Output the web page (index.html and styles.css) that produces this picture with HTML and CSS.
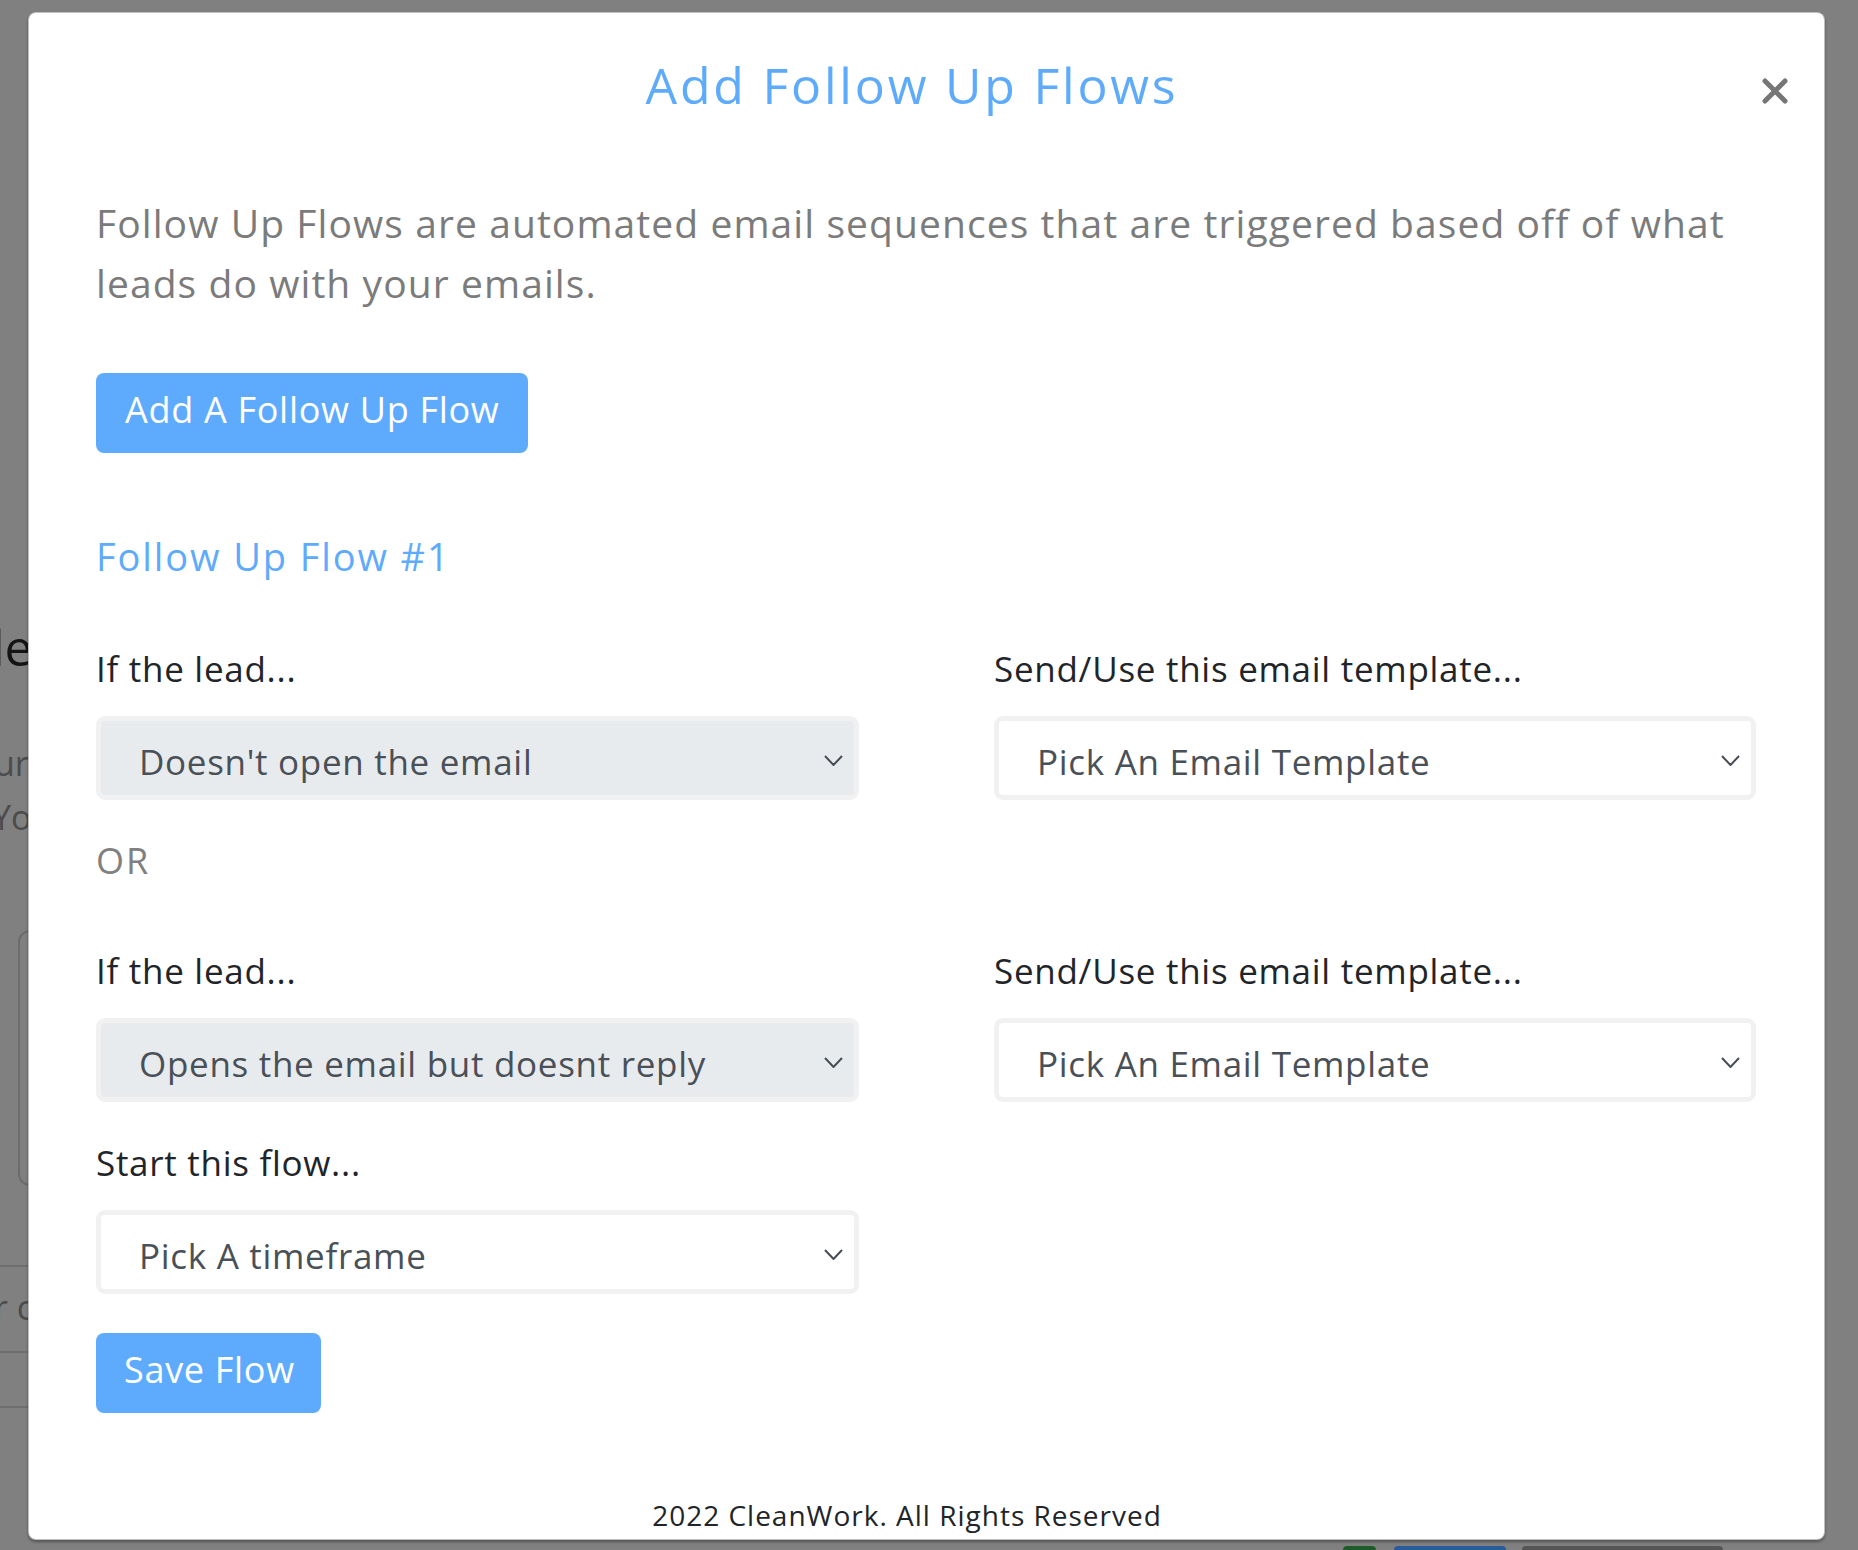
FILE: index.html
```html
<!DOCTYPE html>
<html lang="en">
<head>
<meta charset="utf-8">
<title>Add Follow Up Flows</title>
<link rel="stylesheet" href="styles.css">
</head>
<body>
<div class="backdrop">
  <span class="bg-frag bg-le">le</span>
  <span class="bg-frag bg-ur">ur</span>
  <span class="bg-frag bg-yo">Yo</span>
  <span class="bg-frag bg-rc">r c</span>
  <span class="bg-box"></span>
  <span class="bg-line bg-line1"></span>
  <span class="bg-line bg-line2"></span>
  <span class="bg-line bg-line3"></span>
  <span class="bg-chip chip-green"></span>
  <span class="bg-chip chip-blue"></span>
  <span class="bg-chip chip-gray"></span>
</div>

<div class="modal">
  <div class="modal-header">
    <h1 class="modal-title">Add Follow Up Flows</h1>
    <button class="close" aria-label="Close">
      <svg width="26" height="26" viewBox="0 0 26 26"><path d="M3 3 L23 23 M23 3 L3 23" stroke="#767676" stroke-width="5" stroke-linecap="round" fill="none"/></svg>
    </button>
  </div>

  <div class="modal-body">
    <p class="intro">Follow Up Flows are automated email sequences that are triggered based off of what leads do with your emails.</p>

    <button class="btn">Add A Follow Up Flow</button>

    <h2 class="flow-title">Follow Up Flow #1</h2>

    <div class="row">
      <div class="field">
        <label class="label">If the lead...</label>
        <div class="select select-filled"><span>Doesn't open the email</span>
          <svg class="chev" width="19" height="11" viewBox="0 0 19 11"><polyline points="1,1 9.5,10 18,1" fill="none" stroke="#464d55" stroke-width="2"/></svg>
        </div>
      </div>
      <div class="field">
        <label class="label">Send/Use this email template...</label>
        <div class="select"><span>Pick An Email Template</span>
          <svg class="chev" width="19" height="11" viewBox="0 0 19 11"><polyline points="1,1 9.5,10 18,1" fill="none" stroke="#464d55" stroke-width="2"/></svg>
        </div>
      </div>
    </div>

    <div class="or">OR</div>

    <div class="row">
      <div class="field">
        <label class="label">If the lead...</label>
        <div class="select select-filled"><span>Opens the email but doesnt reply</span>
          <svg class="chev" width="19" height="11" viewBox="0 0 19 11"><polyline points="1,1 9.5,10 18,1" fill="none" stroke="#464d55" stroke-width="2"/></svg>
        </div>
      </div>
      <div class="field">
        <label class="label">Send/Use this email template...</label>
        <div class="select"><span>Pick An Email Template</span>
          <svg class="chev" width="19" height="11" viewBox="0 0 19 11"><polyline points="1,1 9.5,10 18,1" fill="none" stroke="#464d55" stroke-width="2"/></svg>
        </div>
      </div>
    </div>

    <div class="row row-start">
      <div class="field">
        <label class="label">Start this flow...</label>
        <div class="select"><span>Pick A timeframe</span>
          <svg class="chev" width="19" height="11" viewBox="0 0 19 11"><polyline points="1,1 9.5,10 18,1" fill="none" stroke="#464d55" stroke-width="2"/></svg>
        </div>
      </div>
    </div>

    <button class="btn btn-save">Save Flow</button>

    <footer class="footer">2022 CleanWork. All Rights Reserved</footer>
  </div>
</div>
</body>
</html>
```

FILE: styles.css
```css
* { box-sizing: border-box; }

html, body {
  margin: 0;
  padding: 0;
}

body {
  width: 1858px;
  height: 1550px;
  overflow: hidden;
  background: #808080;
  font-family: "Open Sans", "Noto Sans", sans-serif;
  position: relative;
}

/* dimmed page behind the overlay */
.backdrop {
  position: absolute;
  inset: 0;
  z-index: 0;
}
.bg-frag {
  position: absolute;
  font-family: "Open Sans", sans-serif;
  line-height: 1;
}
.bg-le { top: 622px; font-size: 50px; color: #141414; left: -8px; }
.bg-ur { top: 746px; font-size: 34px; color: #4c4c4c; left: -6px; }
.bg-yo { top: 800px; font-size: 34px; color: #4c4c4c; left: -8px; }
.bg-rc { top: 1290px; font-size: 34px; color: #4c4c4c; left: -6px; }
.bg-box {
  position: absolute;
  left: 18px;
  top: 930px;
  width: 40px;
  height: 256px;
  border: 2px solid #6c6c6c;
  border-radius: 12px;
}
.bg-line {
  position: absolute;
  left: 0;
  width: 40px;
  height: 2px;
  background: #6e6e6e;
}
.bg-line1 { top: 1265px; }
.bg-line2 { top: 1351px; }
.bg-line3 { top: 1406px; }
.bg-chip {
  position: absolute;
  top: 1546px;
  height: 10px;
  border-radius: 4px;
}
.chip-green { left: 1343px; width: 33px; background: #1e5b2a; }
.chip-blue { left: 1394px; width: 112px; background: #2a5b99; }
.chip-gray { left: 1522px; width: 201px; background: #555; }

/* modal */
.modal {
  position: relative;
  z-index: 1;
  margin: 12px 0 0 28px;
  width: 1797px;
  height: 1528px;
  background: #fff;
  border-radius: 8px;
  border: 1px solid rgba(0, 0, 0, 0.25);
  box-shadow: 0 2px 3px rgba(0, 0, 0, 0.35);
}

.modal-header {
  display: flex;
  align-items: flex-start;
  padding: 42px 36px 0 33px;
}
.modal-title {
  flex: 1;
  margin: 0;
  text-align: center;
  font-size: 50px;
  line-height: 60px;
  font-weight: 400;
  letter-spacing: 2.8px;
  color: #5fabfb;
}
.close {
  margin-top: 23px;
  padding: 0;
  border: 0;
  background: none;
  width: 26px;
  height: 26px;
  display: block;
}
.close svg { display: block; }

.modal-body {
  padding: 0 68px 0 67px;
}

.intro {
  margin: 78px 0 0 0;
  font-size: 39px;
  line-height: 60px;
  letter-spacing: 1.08px;
  color: #7b7b7b;
}

.btn {
  display: inline-block;
  margin-top: 60px;
  padding: 15px 29px 21px;
  border: 0;
  border-radius: 8px;
  background: #5eabfd;
  color: #fff;
  font-family: inherit;
  font-size: 36px;
  line-height: 44px;
  letter-spacing: 0.7px;
  height: 80px;
}

.flow-title {
  margin: 80px 0 0 0;
  font-size: 38px;
  line-height: 46px;
  font-weight: 400;
  letter-spacing: 1.9px;
  color: #5fabfb;
}

.row {
  display: grid;
  grid-template-columns: 763px 762px;
  column-gap: 135px;
}
.flow-title + .row { margin-top: 68px; }
.or + .row { margin-top: 66px; }
.row-start { margin-top: 39px; }

.field {
  display: flex;
  flex-direction: column;
}

.label {
  font-size: 35px;
  line-height: 44px;
  letter-spacing: 0.72px;
  color: #212529;
  margin-bottom: 25px;
}

.select {
  height: 84px;
  border: 5px solid #f1f1f1;
  border-radius: 9px;
  background: #fff;
  display: flex;
  align-items: center;
  justify-content: space-between;
  padding: 7px 11px 0 38px;
  font-size: 35px;
  line-height: 44px;
  letter-spacing: 0.7px;
  color: #495057;
}
.select-filled {
  background: #e8ebee;
}
.chev {
  display: block;
  margin-bottom: 3px;
}

.or {
  margin-top: 39px;
  font-size: 36px;
  line-height: 44px;
  letter-spacing: 2px;
  color: #808080;
}

.btn-save {
  display: block;
  margin-top: 39px;
  padding-left: 28px;
  padding-right: 26px;
}

.footer {
  margin-top: 84px;
  padding-right: 38px;
  text-align: center;
  font-size: 28px;
  line-height: 36px;
  letter-spacing: 1px;
  color: #212529;
}
```
